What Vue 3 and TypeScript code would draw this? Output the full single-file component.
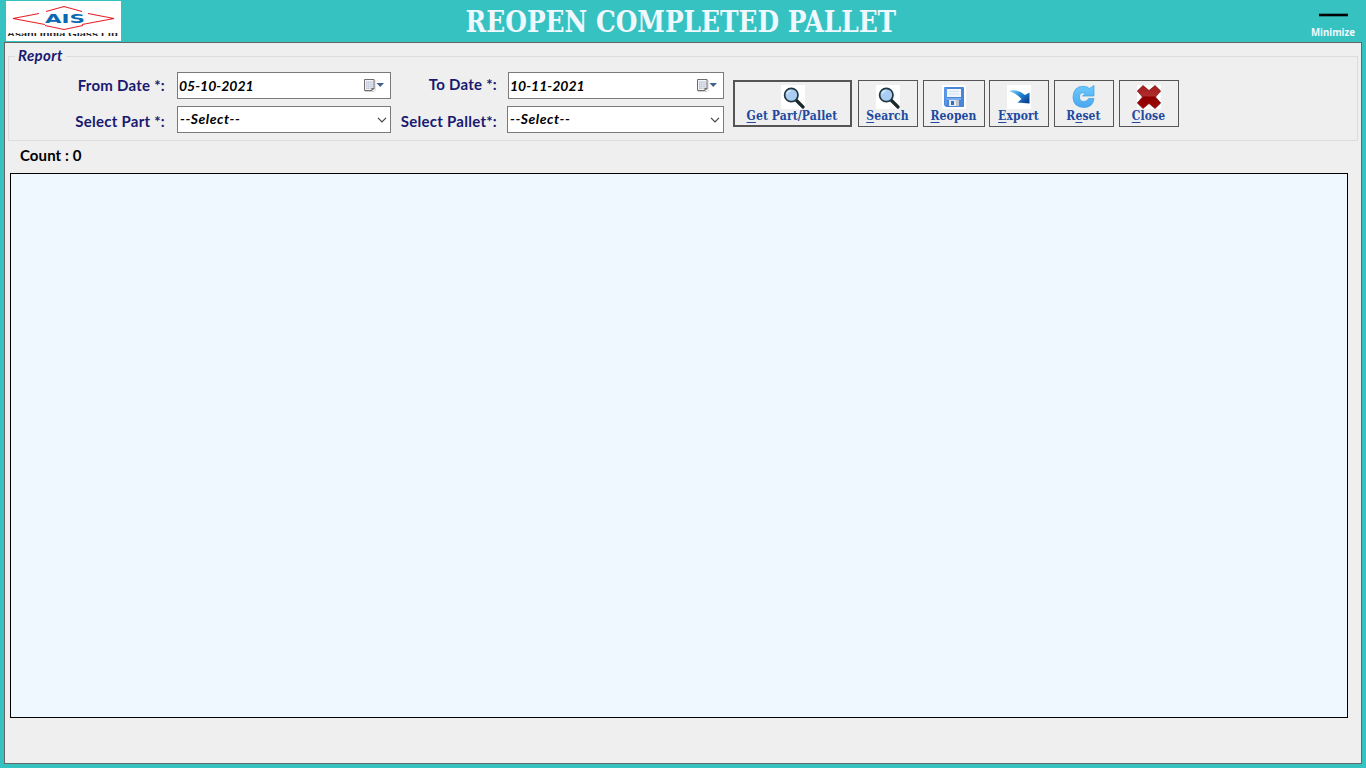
<script setup lang="ts">
interface Action { id: string; before: string; key: string; after: string; icon: string; width: number }

const dates = ['05-10-2021', '10-11-2021']
const actions: Action[] = [
  { id: 'get', before: '', key: 'G', after: 'et Part/Pallet', icon: 'search', width: 119 },
  { id: 'search', before: '', key: 'S', after: 'earch', icon: 'search', width: 60 },
  { id: 'reopen', before: '', key: 'R', after: 'eopen', icon: 'save', width: 62 },
  { id: 'export', before: '', key: 'E', after: 'xport', icon: 'export', width: 60 },
  { id: 'reset', before: 'R', key: 'e', after: 'set', icon: 'reset', width: 60 },
  { id: 'close', before: '', key: 'C', after: 'lose', icon: 'close', width: 60 },
]
</script>

<template>
  <div class="window">
    <header class="titlebar">
      <div class="logo">
        <svg width="115" height="40" viewBox="0 0 115 40">
          <rect width="115" height="40" fill="#fff" />
          <path d="M40 10.500 58 5.500 76 10.500M33 12.500 7 17.500 39 23.500M82 12.500 108 17.500 76 23.500M39 24.500 58 28.500 77 24.500" fill="none" stroke="#e8202a" stroke-width="1.200" />
          <text x="39" y="21.500" textLength="40" lengthAdjust="spacingAndGlyphs" class="brand">AIS</text>
          <svg x="0" y="32" width="115" height="3" viewBox="0 0 115 3">
            <text x="1" y="4" textLength="111" lengthAdjust="spacingAndGlyphs" class="company">Asahi India Glass Ltd</text>
          </svg>
        </svg>
      </div>
      <h1><span>REOPEN COMPLETED PALLET</span></h1>
      <button class="minimize"><i></i><span>Minimize</span></button>
    </header>

    <main class="panel">
      <section class="report">
        <div class="legend">Report</div>
        <div class="fields">
          <label class="l1">From Date *:</label>
          <div class="field date">
            <span>{{ dates[0] }}</span>
            <svg class="cal" width="21" height="14" viewBox="0 0 21 14">
              <path d="M2 13.500h9l1-1V2" fill="none" stroke="#cfcdcd" />
              <path d="M1.500 1.500h9.500v9l-2 2H1.500z" fill="#f4f3f6" stroke="#75696b" />
              <path d="M3 3.500h6.500v7.500H3z" fill="#b2bfd4" />
              <path d="M3 5.300h6.500M3 7.300h6.500M3 9.300h6.500M4.700 3.500v7.500M6.400 3.500v7.500M8 3.500v7.500" stroke="#eef2fa" stroke-width=".6" />
              <path d="M8.500 13v-3h3z" fill="#75696b" />
              <path d="M13.500 5h7.500l-3.750 4z" fill="#435f90" />
            </svg>
          </div>
          <label class="l2">To Date *:</label>
          <div class="field date second">
            <span>{{ dates[1] }}</span>
            <svg class="cal" width="21" height="14" viewBox="0 0 21 14">
              <path d="M2 13.500h9l1-1V2" fill="none" stroke="#cfcdcd" />
              <path d="M1.500 1.500h9.500v9l-2 2H1.500z" fill="#f4f3f6" stroke="#75696b" />
              <path d="M3 3.500h6.500v7.500H3z" fill="#b2bfd4" />
              <path d="M3 5.300h6.500M3 7.300h6.500M3 9.300h6.500M4.700 3.500v7.500M6.400 3.500v7.500M8 3.500v7.500" stroke="#eef2fa" stroke-width=".6" />
              <path d="M8.500 13v-3h3z" fill="#75696b" />
              <path d="M13.500 5h7.500l-3.750 4z" fill="#435f90" />
            </svg>
          </div>
          <label class="l3">Select Part *:</label>
          <div class="field combo">
            <span>--Select--</span>
            <svg width="10" height="6" viewBox="0 0 10 6"><path d="M1 .8 5 4.800 9 .8" fill="none" stroke="#444" stroke-width="1.200" /></svg>
          </div>
          <label class="l4">Select Pallet*:</label>
          <div class="field combo">
            <span>--Select--</span>
            <svg width="10" height="6" viewBox="0 0 10 6"><path d="M1 .8 5 4.800 9 .8" fill="none" stroke="#444" stroke-width="1.200" /></svg>
          </div>
        </div>

        <div class="actions">
          <button v-for="a in actions" :key="a.id" :class="['action', a.id]" :style="{ width: a.width + 'px' }">
            <svg width="24" height="24" viewBox="0 0 24 24">
              <rect v-if="a.icon !== 'reset'" width="24" height="24" fill="#fff" />
              <g v-if="a.icon === 'search'">
                <path d="M14.500 14.500 22 22" stroke="#18282b" stroke-width="3.200" stroke-linecap="round" />
                <circle cx="10.300" cy="10" r="6.700" fill="#a9cdf5" stroke="#213740" stroke-width="1.700" />
                <path d="M6 9a4.500 4.500 0 0 1 4-3.500" fill="none" stroke="#d5e8fd" stroke-width="1.500" />
              </g>
              <g v-else-if="a.icon === 'save'">
                <path d="M2 3q0-1 1-1h18q1 0 1 1v19H4l-2-2z" fill="#4a86d8" />
                <path d="M2 3h3v17H3z" fill="#5d99e8" />
                <path d="M5 4h14v8H5z" fill="#eff5fb" />
                <path d="M7 6.500h10M7 9h10" stroke="#d2e1ef" />
                <path d="M5 13h14v2H5z" fill="#78adf0" />
                <path d="M7 15h10v6H7z" fill="#e5e7ea" />
                <path d="M9 16h3v4H9z" fill="#336fc3" />
                <path d="M14 15h3v6h-3z" fill="#bfc5ce" />
              </g>
              <g v-else-if="a.icon === 'export'">
                <defs><linearGradient id="arrowBlue" x1="0" y1="0" x2="1" y2=".8"><stop stop-color="#90d9f8" /><stop offset=".48" stop-color="#2489d8" /><stop offset="1" stop-color="#083f91" /></linearGradient></defs>
                <path d="M2 6Q11 3.500 18 10L22.500 7.500V18.500L10.500 17.500 14.500 14Q10 8.500 2 6Z" fill="url(#arrowBlue)" />
              </g>
              <g v-else-if="a.icon === 'reset'">
                <defs><linearGradient id="resetBlue" x2="0" y2="1"><stop stop-color="#6bcafd" /><stop offset="1" stop-color="#49a8ef" /></linearGradient></defs>
                <path d="M17.500 3.500 22 .5V11H10.500L13.500 8.200Q7.500 6.500 7.500 12q0 4.500 4.500 4.500 3 0 4.500-3h5.500Q21 22.500 12 22.500 1 22 1 12 1.500 1.500 11 1.300q4 0 6.500 2.200Z" fill="url(#resetBlue)" stroke="#3e9de3" stroke-width=".7" />
              </g>
              <g v-else>
                <defs><linearGradient id="crossRed" x2="0" y2="1"><stop stop-color="#a51c1e" /><stop offset=".45" stop-color="#b02c2c" /><stop offset=".5" stop-color="#8c0000" /><stop offset="1" stop-color="#a00606" /></linearGradient></defs>
                <path d="M6 .5 12 5.500 18 .5 23.700 6 18.500 12 23.700 18 18 23.500 12 18.500 6 23.500 .3 18 5.500 12 .3 6Z" fill="url(#crossRed)" stroke="#731010" stroke-width=".7" stroke-linejoin="round" />
              </g>
            </svg>
            <span class="caption">{{ a.before }}<u>{{ a.key }}</u>{{ a.after }}</span>
          </button>
        </div>
      </section>
      <div class="count">Count : 0</div>
      <div class="results"></div>
    </main>
  </div>
</template>

<style>
html, body { margin: 0; overflow: hidden; }
</style>
<style scoped>
* { box-sizing: border-box; }
button { margin: 0; padding: 0; border: 0; background: none; font: inherit; }
.window { width: 1366px; height: 768px; padding: 0 4px 4px; background: #36c2c0; font-family: Lato, "Liberation Sans", sans-serif; font-weight: 700; display: flex; flex-direction: column; }
.titlebar { height: 42px; flex: none; display: grid; grid-template-columns: 117px 1fr 58px; }
.logo { padding: 1px 0 0 2px; height: 41px; }
.logo svg { display: block; }
.brand { font: bold 12.500px "DejaVu Sans", sans-serif; fill: #0868b2; }
.company { font: bold 9px "Liberation Sans", sans-serif; fill: #222; }
h1 { margin: 0; padding: 1px 63px 0 0; text-align: center; font: bold 29px/42px "DejaVu Serif Condensed", "DejaVu Serif", serif; font-stretch: condensed; color: #f0f8ff; white-space: nowrap; }
h1 span { display: inline-block; transform: scaleX(.953); }
.minimize { display: flex; flex-direction: column; align-items: center; color: #f0f8ff; font: bold 9.700px/13px "Noto Sans", sans-serif; padding-top: 13px; }
.minimize i { width: 29px; height: 4px; background: #000; border: solid #238a89; border-width: 1px 0; margin-bottom: 9px; }
.panel { height: 722px; width: 1358px; border: 1px solid #666; background: #efefef; }
.report { position: relative; width: 1350px; height: 85px; margin: 13px 0 0 3px; border: 1px solid #dcdcdc; display: flex; }
.legend { position: absolute; left: 6px; top: -11px; padding: 0 3px; background: #efefef; color: #191970; font-size: 15px; line-height: 18px; font-style: italic; letter-spacing: .4px; }
.fields { padding-top: 15px; display: grid; grid-template-columns: 156px 12px 214px 106px 10px 217px; grid-template-rows: 27px 27px; row-gap: 7px; width: 715px; }
label { color: #191970; font-size: 15px; line-height: 27px; text-align: right; white-space: nowrap; letter-spacing: .26px; }
.l1, .l3 { grid-column: 1; }
.l2, .l4 { grid-column: 4; }
.l3, .l4 { padding-top: 2px; }
.l2 { line-height: 25px; }
.field { height: 27px; background: #fff; border: 1px solid #7a7a7a; display: flex; align-items: center; justify-content: space-between; color: #000; font-size: 14px; font-style: italic; padding: 0 3px 0 1px; }
.date, .combo { grid-column: 3; }
.second, .l4 + .combo { grid-column: 6; }
.second { margin-left: 1px; }
.combo { padding-left: 2px; letter-spacing: .55px; }
.combo span { padding-bottom: 2px; }
.date { padding-right: 6px; }
.cal { margin-top: -1px; }
.actions { display: flex; padding: 23px 0 0 9px; gap: 5px; }
.action { height: 47px; border: 1px solid #555; display: flex; flex-direction: column; align-items: center; padding-top: 4px; color: #2149a0; flex: none; }
.action.get { border-width: 2px; padding-top: 3px; margin-right: 1px; }
.action.reopen { margin-right: -1px; }
.action svg { flex: none; }
.caption { font: bold 12px/14px "DejaVu Serif Condensed", "DejaVu Serif", serif; font-stretch: condensed; white-space: nowrap; letter-spacing: .12px; margin-left: -1px; }
.caption u { text-underline-offset: 2px; text-decoration-thickness: 1px; }
.count { margin: 5px 0 0 15px; height: 27px; font-size: 15px; line-height: 19px; color: #000; letter-spacing: .1px; }
.results { width: 1338px; height: 545px; margin-left: 5px; background: #f0f8ff; border: 1px solid #000; }
</style>
